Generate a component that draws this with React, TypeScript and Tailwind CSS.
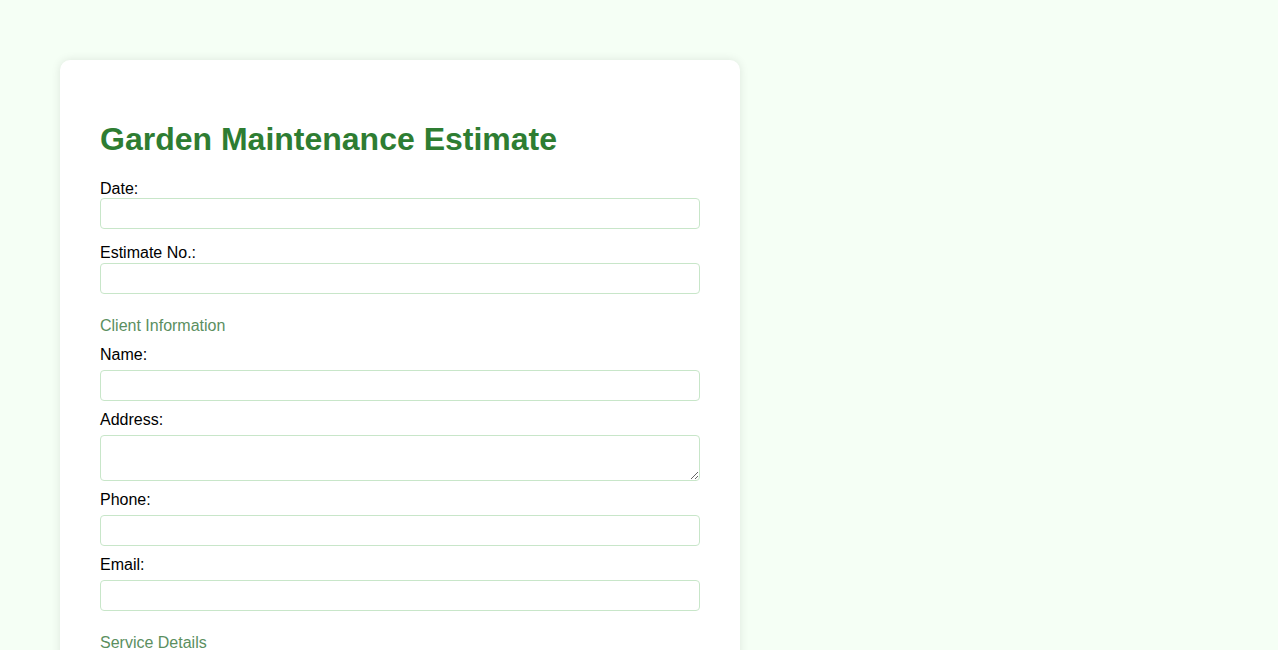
import React from "react";

function Field({ label, textarea, client }: { label: string; textarea?: boolean; client?: boolean }) {
  return (
    <div className={client ? "mb-[10.6px]" : "mb-[15px]"}>
      <label className={"block text-[16px] leading-[18.4px] text-black " + (client ? "mb-[5px]" : "")}>{label}</label>
      {textarea ? (
        <textarea className="block w-full h-[46px] rounded-[4px] border border-[#c8e6c9] bg-white" />
      ) : (
        <input type="text" className="block w-full h-[31px] rounded-[4px] border border-[#c8e6c9] bg-white" />
      )}
    </div>
  );
}

export default function App() {
  return (
    <div
      className="min-h-[650px] bg-[#f5fff5] pt-[60px] pl-[60px]"
      style={{ fontFamily: '"Liberation Sans", Arial, sans-serif' }}
    >
      <div className="w-[680px] h-[620px] overflow-hidden rounded-[10px] bg-white px-[40px] pt-[40px] shadow-[0_0_10px_rgba(0,0,0,0.1)]">
        <h1 className="my-[21.44px] text-[32px] leading-[37px] font-bold text-[#2e7d32]">
          Garden Maintenance Estimate
        </h1>
        <Field label="Date:" />
        <Field label="Estimate No.:" />
        <h3 className="mt-[23px] mb-[11px] text-[16px] leading-[18.4px] text-[#5b8f5f]">Client Information</h3>
        <Field label="Name:" client />
        <Field label="Address:" textarea client />
        <Field label="Phone:" client />
        <Field label="Email:" client />
        <h3 className="mt-[23px] mb-[11px] text-[16px] leading-[18.4px] text-[#5b8f5f]">Service Details</h3>
      </div>
    </div>
  );
}
